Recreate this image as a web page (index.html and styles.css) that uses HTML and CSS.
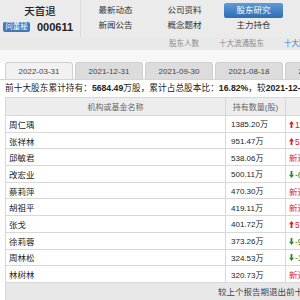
FILE: index.html
```html
<!DOCTYPE html>
<html lang="zh-CN">
<head>
    <meta charset="UTF-8">
    <title>天首退 - 股东研究</title>
    <link rel="stylesheet" href="styles.css">
</head>
<body>
<div class="page">

    <div class="top">
        <div class="stock">
            <div class="stock-name">天首退</div>
            <div class="stock-code"><span class="badge">问董秘</span><b>000611</b></div>
        </div>
        <div class="menu">
            <a>最新动态</a>
            <a>公司资料</a>
            <a class="active">股东研究</a>
            <a>新闻公告</a>
            <a>概念题材</a>
            <a>主力持仓</a>
        </div>
    </div>

    <div class="subnav">
        <a>股东人数</a>
        <a>十大流通股东</a>
        <a class="current">十大股东</a>
    </div>

    <div class="band"></div>

    <div class="tabs">
        <div class="tab on">2022-03-31</div>
        <div class="tab">2021-12-31</div>
        <div class="tab">2021-09-30</div>
        <div class="tab">2021-08-18</div>
        <div class="tab">2021-06-30</div>
    </div>

    <div class="summary">
        前十大股东累计持有：<b>5684.49</b>万股，累计占总股本比：<b>16.82%</b>，较<b>2021-12-31</b>相比变动
    </div>

    <table class="holders">
        <thead>
            <tr>
                <th class="c-name">机构或基金名称</th>
                <th class="c-qty">持有数量(股)</th>
                <th class="c-chg">持股变化(股)</th>
            </tr>
        </thead>
        <tbody>
            <tr><td>周仁瑀</td><td>1385.20万</td><td class="up"><svg class="arr" viewBox="0 0 5 7"><path d="M2.5 0L5 3.2H3.4V7H1.6V3.2H0Z"/></svg>117.72万</td></tr>
            <tr><td>张祥林</td><td>951.47万</td><td class="up"><svg class="arr" viewBox="0 0 5 7"><path d="M2.5 0L5 3.2H3.4V7H1.6V3.2H0Z"/></svg>53.20万</td></tr>
            <tr><td>邱敏君</td><td>538.06万</td><td class="up">新进</td></tr>
            <tr><td>改宏业</td><td>500.11万</td><td class="down"><svg class="arr" viewBox="0 0 5 7"><path d="M2.5 7L5 3.8H3.4V0H1.6V3.8H0Z"/></svg>-60.00万</td></tr>
            <tr><td>蔡莉萍</td><td>470.30万</td><td class="up">新进</td></tr>
            <tr><td>胡祖平</td><td>419.11万</td><td class="up">新进</td></tr>
            <tr><td>张戈</td><td>401.72万</td><td class="up"><svg class="arr" viewBox="0 0 5 7"><path d="M2.5 0L5 3.2H3.4V7H1.6V3.2H0Z"/></svg>51.72万</td></tr>
            <tr><td>徐莉蓉</td><td>373.26万</td><td class="down"><svg class="arr" viewBox="0 0 5 7"><path d="M2.5 7L5 3.8H3.4V0H1.6V3.8H0Z"/></svg>-9.80万</td></tr>
            <tr><td>周林松</td><td>324.53万</td><td class="down"><svg class="arr" viewBox="0 0 5 7"><path d="M2.5 7L5 3.8H3.4V0H1.6V3.8H0Z"/></svg>-13.47万</td></tr>
            <tr><td>林树林</td><td>320.73万</td><td class="up">新进</td></tr>
        </tbody>
    </table>

    <div class="exited">较上个报告期退出前十大股东有</div>

</div>
</body>
</html>
```

FILE: styles.css
```css
* {
    box-sizing: border-box;
    margin: 0;
    padding: 0;
}
body {
    width: 300px;
    height: 300px;
    overflow: hidden;
    background: #fff;
    color: #333;
    font-family: "Liberation Sans", "Noto Sans CJK SC", sans-serif;
    font-size: 8.5px;
}
.page {
    width: 440px;
}
.top {
    display: flex;
    height: 37px;
    background: #ebebeb;
}
.stock {
    width: 81px;
    border-right: 1px solid #dadada;
}
.stock-name {
    padding-top: 3px;
    height: 20px;
    line-height: 17px;
    text-align: center;
    font-size: 10.5px;
    font-weight: 500;
    color: #222;
}
.stock-code {
    display: flex;
    align-items: center;
    height: 14px;
    padding-left: 3px;
    gap: 7px;
}
.badge {
    display: inline-block;
    width: 27px;
    height: 10px;
    line-height: 10px;
    text-align: center;
    background: #3a7bbf;
    color: #fff;
    font-size: 7.5px;
    border-radius: 2px;
}
.stock-code b {
    font-size: 11px;
    color: #222;
}
.menu {
    display: grid;
    grid-template-columns: repeat(3, 69px);
    grid-auto-rows: 15px;
    padding-top: 3px;
    text-align: center;
    line-height: 15px;
    color: #333;
}
.menu .active {
    margin: 0 5px;
    background: linear-gradient(#5d9bd8, #2f6db4);
    color: #fff;
    border-radius: 2px;
}
.subnav {
    display: flex;
    gap: 20px;
    height: 13px;
    padding-left: 169px;
    line-height: 13px;
    background: #e9e9e9;
    color: #8a8a8a;
    font-size: 7.5px;
}
.subnav .current {
    color: #3a7cc8;
}
.band {
    height: 12px;
    background: #f7f7f7;
}
.tabs {
    display: flex;
    gap: 2px;
    height: 18px;
    padding-left: 5px;
    border-bottom: 1px solid #d4d4d4;
}
.tab {
    width: 68px;
    border: 1px solid #cfcfcf;
    border-bottom: none;
    border-radius: 3px 3px 0 0;
    background: #dcdcdc;
    text-align: center;
    line-height: 17px;
    font-size: 8px;
    color: #444;
}
.tab.on {
    background: #f1f1f1;
}
.summary {
    height: 17px;
    padding-left: 5px;
    line-height: 17px;
    white-space: nowrap;
    font-size: 8.7px;
    color: #222;
}
.holders {
    margin-left: 5px;
    border-collapse: collapse;
    table-layout: fixed;
    width: 420px;
}
.holders th, .holders td {
    border: 1px solid #d8d8d8;
    white-space: nowrap;
    overflow: hidden;
}
.holders th {
    height: 18px;
    background: #ededed;
    color: #666;
    font-weight: normal;
    font-size: 8px;
}
.c-name { width: 220px; }
.c-qty { width: 60px; }
.holders td {
    height: 16.7px;
    padding: 0 3px;
    color: #222;
}
.holders td:nth-child(2) {
    padding-left: 5px;
    font-size: 8px;
}
.holders td.up { color: #d22; }
.holders td.down { color: #2a8a2a; }
.arr {
    width: 5px;
    height: 7px;
    margin-right: 1px;
    fill: currentColor;
}
.exited {
    margin-left: 5px;
    height: 18px;
    padding-left: 212px;
    line-height: 18px;
    background: #e8e8e8;
    border: 1px solid #d8d8d8;
    border-top: none;
    color: #444;
    white-space: nowrap;
}
```
